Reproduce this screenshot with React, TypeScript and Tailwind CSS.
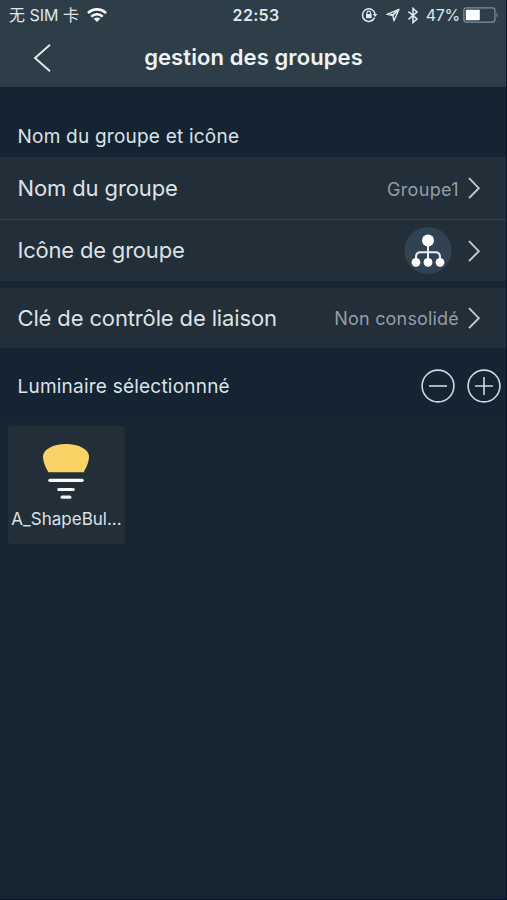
import React from "react";

function Chevron() {
  return (
    <svg width="14" height="24" viewBox="0 0 14 24" fill="none" stroke="#c3cbd1" strokeWidth="1.9" className="shrink-0">
      <path d="M1 2.2 L10.8 12.2 L1 22.2" />
    </svg>
  );
}

function StatusBar() {
  return (
    <div className="flex h-[30px] items-center pl-[9px] pr-[7px] text-[#dfe7ec]">
      <div className="flex flex-1 items-center">
        <span className="whitespace-nowrap text-[16px] leading-[30px]">无 SIM 卡</span>
        <svg width="20" height="15" viewBox="0 0 20 15" className="ml-[8px]" fill="none" stroke="#fff" strokeWidth="2.6">
          <path d="M1 5.2 A12.6 12.6 0 0 1 19 5.2" />
          <path d="M4.3 8.6 A8 8 0 0 1 15.7 8.6" />
          <path d="M10 14 L6.7 10.8 A4.7 4.7 0 0 1 13.3 10.8 Z" fill="#fff" stroke="none" />
        </svg>
      </div>
      <span className="pl-[4px] text-[16px] font-semibold leading-[30px] tracking-[0.3px]">22:53</span>
      <div className="flex flex-1 items-center justify-end">
        <svg width="17" height="16" viewBox="0 0 17 16" fill="none" stroke="#dfe7ec" strokeWidth="1.5">
          <path d="M13.6 10.6 A6.3 6.3 0 1 1 14 7" />
          <path d="M11.8 7 H16.4 L14.1 10 Z" fill="#dfe7ec" stroke="none" />
          <rect x="5" y="7" width="5.6" height="4.2" fill="#dfe7ec" stroke="none" />
          <path d="M6 7.4 V6 A1.8 1.8 0 0 1 9.6 6 V7.4" strokeWidth="1.2" />
        </svg>
        <svg width="14" height="14" viewBox="0 0 14 14" className="ml-[8px]" fill="none" stroke="#dfe7ec" strokeWidth="1.4" strokeLinejoin="round">
          <path d="M13 1.3 L1 6.4 L6.8 7.2 L8 12.8 Z" />
          <path d="M12.6 1.6 L6.8 7.2 L4 6.4" strokeWidth="1.8" />
        </svg>
        <svg width="12" height="17" viewBox="0 0 12 17" className="ml-[7px]" fill="none" stroke="#dfe7ec" strokeWidth="1.6">
          <path d="M1.5 4.6 L10 12 L6 15.5 V1.5 L10 5 L1.5 12.4" />
        </svg>
        <span className="ml-[7px] text-[16px] leading-[30px] tracking-[-0.3px]">47%</span>
        <svg width="36" height="16" viewBox="0 0 36 16" className="ml-[3px]">
          <rect x="0.9" y="0.9" width="31" height="14.2" rx="2.6" fill="none" stroke="#80919b" strokeWidth="1.2" />
          <rect x="2.8" y="2.8" width="14" height="10.4" rx="0.8" fill="#fff" />
          <path d="M33.5 5.4 Q35.6 8 33.5 10.6 Z" fill="#80919b" />
        </svg>
      </div>
    </div>
  );
}

function TitleBar() {
  return (
    <div className="flex h-[57px] items-center">
      <svg width="20" height="30" viewBox="0 0 20 30" className="ml-[32px]" fill="none" stroke="#e3ebef" strokeWidth="1.9">
        <path d="M18 0.8 L3 14 L18 27.2" />
      </svg>
      <h1 className="flex-1 pb-[2px] pr-[51px] text-center text-[22px] font-semibold leading-[55px] tracking-[0.1px] text-[#eef3f6]">
        gestion des groupes
      </h1>
    </div>
  );
}

function BulbIcon() {
  return (
    <svg width="48" height="58" viewBox="0 0 48 58" className="mr-[1.5px] shrink-0">
      <path d="M6.4 29.2 Q1 20.500 1 13.500 C1 6.500 11 1 24 1 C37 1 47 6.500 47 13.500 Q47 20.500 41.600 29.200 Z" fill="#fad367" />
      <g stroke="#f7f9fb" strokeWidth="3.2" strokeLinecap="round">
        <path d="M7.800 37.300 H40.200" />
        <path d="M16.800 46.500 H31.200" />
        <path d="M20.200 54.200 H27.800" />
      </g>
    </svg>
  );
}

export default function App() {
  return (
    <div className="flex h-[900px] w-[507px] flex-col overflow-hidden border-b border-r border-[#06142c] bg-[#172633] font-['Inter','Noto_Sans_CJK_SC',sans-serif] text-[#dce2e7]">
      <header className="h-[87px] shrink-0 bg-[#2e3e49]">
        <StatusBar />
        <TitleBar />
      </header>
      <div className="flex h-[70px] shrink-0 items-end bg-[#142432] pl-[17.5px]">
        <h2 className="whitespace-nowrap text-[19px] leading-[40px] tracking-[0.22px]">Nom du groupe et icône</h2>
      </div>
      <div className="flex h-[63px] shrink-0 items-center justify-between border-b border-[#3a4751] bg-[#222e38] pl-[17.5px] pr-[24px]">
        <span className="whitespace-nowrap pt-[1px] text-[22px] tracking-[-0.12px]">Nom du groupe</span>
        <div className="flex items-center gap-[9px]">
          <span className="pt-[2px] text-[18px] tracking-[0.35px] text-[#949da5]">Groupe1</span>
          <Chevron />
        </div>
      </div>
      <div className="flex h-[61px] shrink-0 items-center justify-between bg-[#222e38] pl-[17.5px] pr-[24px]">
        <span className="whitespace-nowrap text-[22px] tracking-[-0.2px]">Icône de groupe</span>
        <div className="flex items-center gap-[16px]">
          <svg width="48" height="48" viewBox="0 0 48 48">
            <circle cx="24" cy="23.5" r="23.5" fill="#314352" />
            <g fill="none" stroke="#e8eef3" strokeWidth="2">
              <path d="M24 14 V35" />
              <path d="M12 35 V30 Q12 25.3 16.5 25.3 H31.5 Q36 25.3 36 30 V35" />
            </g>
            <g fill="#fff">
              <circle cx="24" cy="13.6" r="6" />
              <circle cx="12" cy="35.3" r="4.4" />
              <circle cx="24" cy="35.3" r="4.4" />
              <circle cx="36" cy="35.3" r="4.4" />
            </g>
          </svg>
          <Chevron />
        </div>
      </div>
      <div className="mt-[7px] flex h-[60px] shrink-0 items-center justify-between bg-[#222e38] pl-[17.5px] pr-[24px]">
        <span className="whitespace-nowrap text-[22px] tracking-[-0.14px]">Clé de contrôle de liaison</span>
        <div className="flex items-center gap-[9px]">
          <span className="whitespace-nowrap pt-[1px] text-[18px] tracking-[0.18px] text-[#949da5]">Non consolidé</span>
          <Chevron />
        </div>
      </div>
      <div className="flex h-[75px] shrink-0 items-center justify-between bg-[#142432] pl-[17.5px] pr-[5px]">
        <h2 className="whitespace-nowrap pt-[3px] text-[19px] tracking-[0.22px]">Luminaire sélectionnné</h2>
        <div className="flex items-center gap-[12px]">
          <svg width="34" height="34" viewBox="0 0 34 34" fill="none" stroke="#d0d9df" strokeWidth="1.6">
            <circle cx="17" cy="17" r="15.9" />
            <path d="M8 17 H26" />
          </svg>
          <svg width="34" height="34" viewBox="0 0 34 34" fill="none" stroke="#d0d9df" strokeWidth="1.6">
            <circle cx="17" cy="17" r="15.9" />
            <path d="M8 17 H26 M17 8 V26" />
          </svg>
        </div>
      </div>
      <div className="ml-[8px] mt-[3px] flex h-[118px] w-[117px] shrink-0 flex-col items-center rounded-[4px] bg-[#222e38] pt-[17px]">
        <BulbIcon />
        <span className="mt-[6px] whitespace-nowrap text-[17px] leading-[24px]">A_ShapeBul...</span>
      </div>
    </div>
  );
}
